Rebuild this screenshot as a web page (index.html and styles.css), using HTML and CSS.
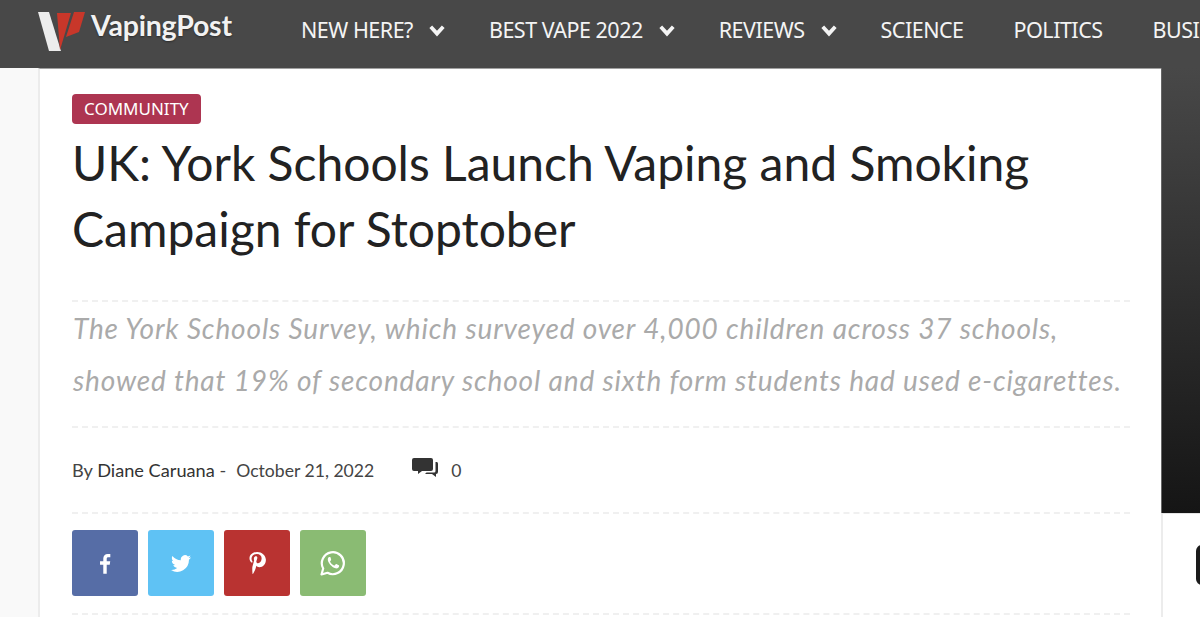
FILE: index.html
```html
<!DOCTYPE html>
<html lang="en">
<head>
  <meta charset="UTF-8" />
  <meta name="viewport" content="width=device-width, initial-scale=1.0" />
  <title>UK: York Schools Launch Vaping and Smoking Campaign for Stoptober</title>
  <link rel="stylesheet" href="styles.css">
</head>
<body>
  <header class="topbar">
    <a class="logo" href="#">
      <svg class="logo-mark" viewBox="0 0 48 42" width="48" height="42">
        <polygon points="0,1 11,1 23,40 11,40" fill="#ececec"/>
        <polygon points="19,2 33,2 22,39" fill="#c8372a"/>
        <polygon points="36,1 47,1 41,21 28,26" fill="#c8372a"/>
      </svg>
      <span class="logo-text">VapingPost</span>
    </a>
    <nav class="menu">
      <a href="#">NEW HERE? <svg class="chev" viewBox="0 0 14 12"><polyline points="2,3 7,8.5 12,3"/></svg></a>
      <a href="#">BEST VAPE 2022 <svg class="chev" viewBox="0 0 14 12"><polyline points="2,3 7,8.5 12,3"/></svg></a>
      <a href="#">REVIEWS <svg class="chev" viewBox="0 0 14 12"><polyline points="2,3 7,8.5 12,3"/></svg></a>
      <a href="#">SCIENCE</a>
      <a href="#">POLITICS</a>
      <a href="#">BUSINESS</a>
    </nav>
  </header>

  <div class="page">
    <div class="gutter"></div>
    <main class="article">
      <a class="tag" href="#">COMMUNITY</a>
      <h1>UK: York Schools Launch Vaping and Smoking Campaign for Stoptober</h1>
      <p class="lede">The York Schools Survey, which surveyed over 4,000 children across 37 schools,<br>showed that 19% of secondary school and sixth form students had used e-cigarettes.</p>
      <div class="meta">
        <span class="by">By <b>Diane Caruana</b> -</span>
        <span class="date">October 21, 2022</span>
        <svg class="comment-icon" viewBox="0 0 28 20" width="28" height="20">
          <path d="M2 0h17a2 2 0 0 1 2 2v9a2 2 0 0 1-2 2H10l-4 3v-3H2a2 2 0 0 1-2-2V2a2 2 0 0 1 2-2z" fill="#333"/>
          <path d="M23.500 4H25a2 2 0 0 1 1 2v8a2 2 0 0 1-2 2v3l-4-3h-7l1.500-1.500H22a1.500 1.500 0 0 0 1.500-1.500z" fill="#333"/>
        </svg>
        <span class="count">0</span>
      </div>
      <div class="share">
        <a class="btn fb" href="#">
          <svg viewBox="0 0 14 24" width="12" height="21"><path d="M9 24V13.500h3.500l.6-4.200H9V6.700c0-1.200.4-2 2.100-2h2.100V1C12.800.9 11.600.8 10.200.8 7.100.8 5 2.700 5 6.200v3.100H1.200v4.200H5V24z" fill="#fff"/></svg>
        </a>
        <a class="btn tw" href="#">
          <svg viewBox="0 0 24 20" width="20" height="17"><path d="M24 2.400c-.9.400-1.800.7-2.800.8 1-.6 1.800-1.600 2.200-2.700-1 .6-2 1-3.100 1.200A4.900 4.900 0 0 0 11.900 6.200C7.800 6 4.200 4 1.700.9c-1.300 2.200-.6 5.100 1.500 6.500-.8 0-1.600-.2-2.200-.6 0 2.300 1.600 4.500 4 5-.7.200-1.500.2-2.200.1.600 2 2.400 3.400 4.600 3.400A9.900 9.900 0 0 1 0 17.800 14 14 0 0 0 21.500 5.400c1-.7 1.800-1.700 2.500-3z" fill="#fff"/></svg>
        </a>
        <a class="btn pin" href="#">
          <svg viewBox="1 0 17.500 24" width="17" height="22" preserveAspectRatio="none"><path d="M9.400 0C4.500 0 1.500 3.300 1.500 7c0 1.700 1 3.900 2.500 4.600.5.200.7-.9.500-1.500-.1-.3-.9-1-.9-2.900 0-3 2.300-5.100 5.500-5.100 2.900 0 4.900 1.900 4.900 4.700 0 3.200-1.600 5.400-3.700 5.400-1.100 0-2-.9-1.700-2.100.3-1.400 1-2.900 1-3.900 0-.9-.5-1.600-1.500-1.600-1.200 0-2.100 1.200-2.100 2.800 0 1 .3 1.700.3 1.700L4.500 16c-.3 1.500-.1 4.800.1 7.600.1.300.4.400.6.200 1-1.400 2.200-4.300 2.600-5.700l.8-3c.4.800 1.700 1.500 3 1.500 4 0 6.800-3.600 6.800-8.200C18 3.400 14.300 0 9.400 0z" fill="#fff"/></svg>
        </a>
        <a class="btn wa" href="#">
          <svg viewBox="0 0 26 26" width="26" height="26">
            <path d="M1.500 24.500l1.700-6A11 11 0 1 1 7.500 22.800z" fill="none" stroke="#fff" stroke-width="2.200" stroke-linejoin="round"/>
            <path d="M9.300 7c-.5 0-1.500.8-1.500 2.500 0 3 3.800 7.800 7.700 8.800 2 .5 3.400-.6 3.600-2 .1-.6 0-1-.3-1.100l-2.400-1.200c-.3-.1-.5 0-.7.200l-1 1.200c-.2.200-.4.300-.7.100-1.800-.8-3-2-3.900-3.700-.1-.3 0-.5.100-.6l.8-1c.1-.2.200-.4.100-.6L10.600 7.600c-.2-.5-.7-.6-1.300-.6z" fill="#fff"/>
          </svg>
        </a>
      </div>
    </main>
    <aside class="side">
      <div class="side-dark"></div>
      <div class="side-light"><span class="side-chip"></span></div>
    </aside>
  </div>
</body>
</html>
```

FILE: styles.css
```css
html, body {
  margin: 0;
  height: 617px;
  overflow: hidden;
}
body {
  font-family: Lato, "Noto Sans", Arial, sans-serif;
  color: #222;
  background: #f9f9f9;
}
a {
  text-decoration: none;
  color: inherit;
}

/* top bar */
.topbar {
  height: 68px;
  background: #484848;
  display: flex;
  align-items: flex-start;
  padding-left: 38px;
  white-space: nowrap;
  overflow: hidden;
}
.logo {
  display: flex;
  align-items: flex-start;
  width: 263px;
  flex: none;
  padding-top: 11px;
}
.logo-mark {
  flex: none;
}
.logo-text {
  font-family: Lato, sans-serif;
  font-weight: 700;
  font-size: 28.500px;
  line-height: 28px;
  color: #f2f2f2;
  margin-left: 5px;
  letter-spacing: -0.2px;
  text-shadow: 0 1px 2px rgba(0, 0, 0, 0.4);
}
.menu {
  display: flex;
  gap: 50px;
  padding-top: 16px;
  color: #f4f4f4;
  font-family: "Noto Sans", sans-serif;
  font-size: 21.500px;
  letter-spacing: -0.5px;
  line-height: 28px;
}
.menu a {
  display: flex;
  align-items: center;
  gap: 15px;
}
.chev {
  width: 18px;
  height: 15px;
  margin-right: -7px;
  fill: none;
  stroke: #f4f4f4;
  stroke-width: 3;
}

/* body columns */
.page {
  display: flex;
  height: 549px;
}
.gutter {
  width: 38px;
  flex: none;
}
.article {
  width: 1123px;
  flex: none;
  background: #fff;
  border-left: 2px solid #ececec;
  border-top: 1px solid #a0a0a0;
  padding: 25px 31px 0 32px;
  box-sizing: border-box;
}
.tag {
  display: inline-block;
  background: #ad3551;
  color: #fff;
  font-family: "Noto Sans", sans-serif;
  font-size: 17px;
  line-height: 30px;
  height: 30px;
  padding: 0 12px;
  border-radius: 4px;
}
h1 {
  font-weight: 400;
  font-size: 48px;
  line-height: 66px;
  margin: 6px 0 0;
  color: #222;
  padding-bottom: 38px;
  border-bottom: 2px dashed #f0f0f0;
}
.lede {
  margin: 0;
  font-style: italic;
  font-size: 28px;
  letter-spacing: 0.85px;
  line-height: 52px;
  color: #aaa;
  padding: 0 0 20px 1px;
  white-space: nowrap;
  border-bottom: 2px dashed #f0f0f0;
}
.meta {
  display: flex;
  align-items: center;
  height: 84px;
  border-bottom: 2px dashed #f0f0f0;
  font-size: 17.600px;
  color: #444;
}
.by {
  font-size: 18.200px;
}
.by b {
  font-weight: 400;
  color: #333;
}
.date {
  margin-left: 10px;
}
.comment-icon {
  margin-left: 38px;
  margin-top: -5px;
}
.count {
  margin-left: 11px;
}
.share {
  display: flex;
  gap: 10px;
  padding: 16px 0 17px;
  border-bottom: 2px dashed #f0f0f0;
}
.btn {
  width: 66px;
  height: 66px;
  border-radius: 3px;
  display: flex;
  align-items: center;
  justify-content: center;
}
.fb { background: #566da6; }
.tw { background: #5fc2f4; }
.pin { background: #b93331; }
.wa { background: #8abb73; }

/* right column */
.side {
  flex: 1;
  display: flex;
  flex-direction: column;
}
.side-dark {
  height: 445px;
  background: linear-gradient(#484848, #151515);
  border-left: 1px solid #666;
  box-sizing: border-box;
  flex: none;
}
.side-light {
  flex: 1;
  background: #fff;
  border-left: 2px solid #ececec;
  border-top: 1px solid #e4e4e4;
  padding: 31px 0 0 33px;
}
.side-chip {
  display: block;
  width: 30px;
  height: 40px;
  background: #1b1b1b;
  border-radius: 6px;
}
```
